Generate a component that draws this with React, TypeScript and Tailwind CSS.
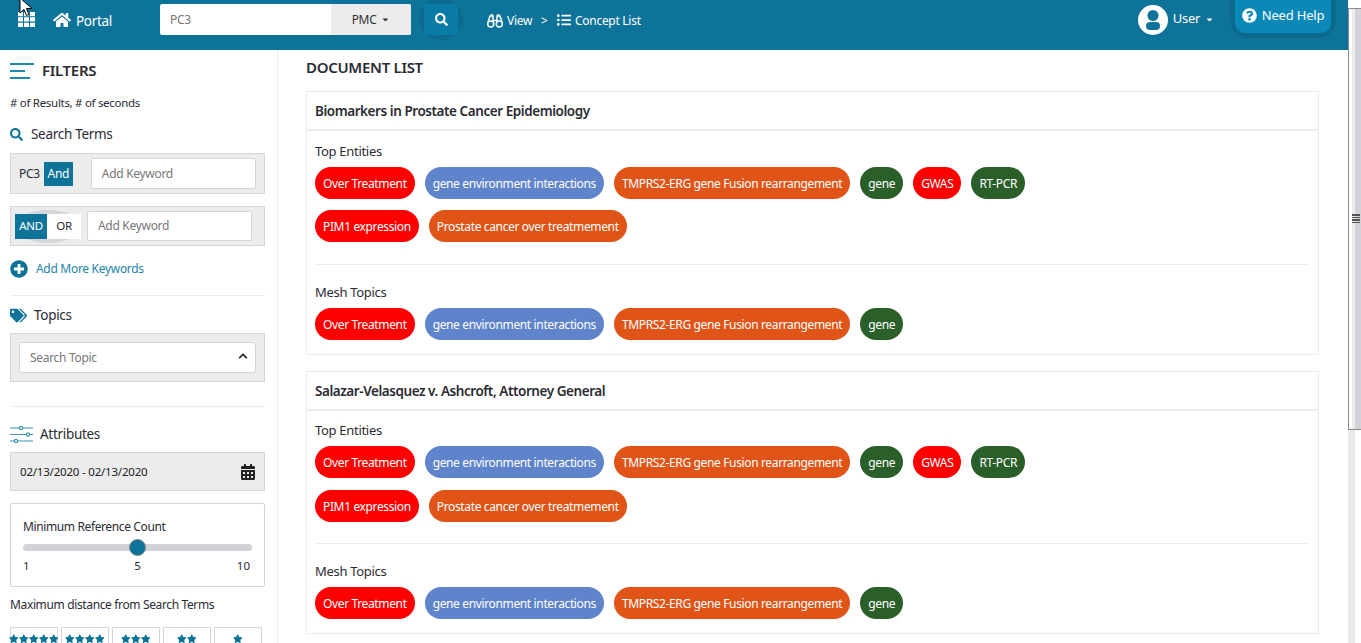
import { FaHome, FaListUl, FaTags, FaCalendarAlt, FaPlusCircle, FaSearch, FaQuestionCircle, FaStar, FaChevronUp, FaCaretDown } from "react-icons/fa"

const RED = "bg-[#ff0000]"
const BLUE = "bg-[#5f84cc]"
const ORANGE = "bg-[#e05517]"
const GREEN = "bg-[#2a5f2a]"

const topEntities = [
  [
    { label: "Over Treatment", color: RED },
    { label: "gene environment interactions", color: BLUE },
    { label: "TMPRS2-ERG gene Fusion rearrangement", color: ORANGE },
    { label: "gene", color: GREEN },
    { label: "GWAS", color: RED },
    { label: "RT-PCR", color: GREEN },
  ],
  [
    { label: "PIM1 expression", color: RED },
    { label: "Prostate cancer over treatmement", color: ORANGE },
  ],
]

const meshTopics = topEntities[0].slice(0, 4)

function Pill({ label, color }: { label: string; color: string }) {
  return (
    <span className={`flex h-8 items-center rounded-full px-2 pt-[1px] text-[12px] tracking-[-0.36px] text-white ${color}`}>
      {label}
    </span>
  )
}

interface DocCardProps {
  title: string
  topGap: string
  rowGap: string
  sepGap: string
}

function DocCard({ title, topGap, rowGap, sepGap }: DocCardProps) {
  return (
    <div className="border border-[#ececec]">
      <div className="flex h-[39px] items-center border-b-2 border-[#ececec] px-2 pt-[2px] text-[13.5px] font-semibold tracking-[-0.44px] text-[#2b2b33]">
        {title}
      </div>
      <div className="px-2">
        <div className={`text-[13px] leading-[18px] tracking-[-0.3px] text-[#2b2b33] ${topGap}`}>Top Entities</div>
        <div className={`mt-[7px] flex flex-col ${rowGap}`}>
          {topEntities.map((row, i) => (
            <div key={i} className="flex gap-[10px]">
              {row.map((p) => (
                <Pill key={p.label} {...p} />
              ))}
            </div>
          ))}
        </div>
        <div className={`border-t border-[#ececec] ${sepGap}`} />
        <div className="mt-[18px] text-[13px] leading-[18px] tracking-[-0.3px] text-[#2b2b33]">Mesh Topics</div>
        <div className="mt-[7px] flex gap-[10px] pb-[14px]">
          {meshTopics.map((p) => (
            <Pill key={p.label} {...p} />
          ))}
        </div>
      </div>
    </div>
  )
}

function FilterLines() {
  return (
    <svg width="24" height="16" viewBox="0 0 24 16" fill="none" stroke="#1b8bb0" strokeWidth="2">
      <path d="M0 1h24M0 8h15M0 15h20" />
    </svg>
  )
}

function SliderLines() {
  return (
    <svg width="23" height="17" viewBox="0 0 23 17" fill="none" stroke="#3b93b3" strokeWidth="1.2">
      <path d="M0 2h23M0 8.500h23M0 15h23" />
      <circle cx="11" cy="2" r="1.600" fill="#fff" />
      <circle cx="18" cy="8.500" r="1.600" fill="#fff" />
      <circle cx="6" cy="15" r="1.600" fill="#fff" />
    </svg>
  )
}

function GridIcon() {
  return (
    <svg className="ml-[18px] mt-[12px]" width="17" height="15" viewBox="0 0 17 15" fill="#fff">
      <path d="M0 0h5v4.300H0zM6 0h5v4.300H6zM12 0h5v4.300h-5zM0 5.300h5v4.300H0zM6 5.300h5v4.300H6zM12 5.300h5v4.300h-5zM0 10.700h5V15H0zM6 10.700h5V15H6zM12 10.700h5V15h-5z" />
    </svg>
  )
}

function BinocularsIcon() {
  return (
    <svg className="ml-[29px] mt-[14px]" width="16" height="14" viewBox="0 0 16 14" fill="none" stroke="#fff">
      <circle cx="3.700" cy="10" r="3" strokeWidth="1.500" />
      <circle cx="12.300" cy="10" r="3" strokeWidth="1.500" />
      <path d="M1 8.500 3 2h3v6M15 8.500 13 2h-3v6M6 6.500h4" strokeWidth="1.500" />
      <path d="M3.500 1h2.500M10 1h2.500" strokeWidth="1.500" />
    </svg>
  )
}

function UserIcon() {
  return (
    <svg width="30" height="30" viewBox="0 0 30 30">
      <circle cx="15" cy="15" r="15" fill="#fff" />
      <circle cx="15" cy="10.500" r="5.500" fill="#0e7399" />
      <rect x="8" y="17" width="14" height="8" rx="4" fill="#0e7399" />
    </svg>
  )
}

function Cursor() {
  return (
    <svg className="absolute left-[19px] top-[-3px]" width="15" height="20" viewBox="0 0 15 20">
      <path d="M1 1v15l4-3.500 2.500 6 2.500-1-2.500-6H13z" fill="#fff" stroke="#000" strokeWidth="1" />
    </svg>
  )
}

function StarCard({ count, last }: { count: number; last?: boolean }) {
  return (
    <div className={`flex h-[30px] w-12 justify-center gap-[0.5px] border border-[#d5d5da] pt-[6px] text-[#0e7399] ${last ? "" : "mr-[3px]"}`}>
      {Array.from({ length: count }).map((_, i) => (
        <FaStar key={i} className="h-[9.5px] w-[9.5px] shrink-0" />
      ))}
    </div>
  )
}

function Sidebar() {
  return (
    <aside className="w-[278px] shrink-0 border-r border-[#ececec] pl-[10px] pr-3 text-[#2b2b33]">
      <div className="flex h-[41px] items-center">
        <FilterLines />
        <span className="ml-2 pb-[1px] text-[15px] font-semibold tracking-[-0.3px]">FILTERS</span>
      </div>
      <div className="mt-[3px] text-[11.5px] leading-[18px] tracking-[-0.3px]">
        # of Results, # of seconds
      </div>
      <div className="mt-[12px] flex h-[20px] items-center">
        <FaSearch className="h-[13px] w-[13px] text-[#0e7399]" />
        <span className="ml-2 text-[13.5px] tracking-[-0.3px]">Search Terms</span>
      </div>
      <div className="mt-[9px] flex h-[41px] items-center border border-[#d5d5da] bg-[#ececec] pl-2 pr-2">
        <span className="text-[12px] tracking-[-0.3px]">PC3</span>
        <span className="ml-1 flex h-6 w-[29px] items-center justify-center bg-[#0e7399] text-[12px] tracking-[-0.3px] text-white">And</span>
        <div className="ml-[18px] flex h-[31px] flex-1 items-center rounded-[2px] border border-[#d5d5da] bg-white pl-[10px] text-[12px] tracking-[-0.3px] text-[#777]">Add Keyword</div>
      </div>
      <div className="mt-3 flex h-[40px] items-center border border-[#d5d5da] bg-[#ececec] pl-1 pr-3">
        <div className="relative flex">
          <span className="absolute inset-x-0 -inset-y-1 rounded-[50%] bg-[#d5d5da]" />
          <span className="relative flex h-[25px] w-8 items-center justify-center bg-[#0e7399] text-[11.5px] tracking-[-0.3px] text-white">AND</span>
          <span className="relative flex h-[25px] w-[34px] items-center justify-center bg-white text-[11.5px] tracking-[-0.3px]">OR</span>
        </div>
        <div className="ml-[6px] flex h-[30px] flex-1 items-center rounded-[2px] border border-[#d5d5da] bg-white pl-[10px] text-[12px] tracking-[-0.3px] text-[#777]">Add Keyword</div>
      </div>
      <div className="mt-[13px] flex h-[20px] items-center">
        <FaPlusCircle className="h-[18px] w-[18px] text-[#0e7399]" />
        <span className="ml-2 text-[12px] tracking-[-0.3px] text-[#1d84a8]">Add More Keywords</span>
      </div>
      <div className="mt-4 border-t border-[#ececec]" />
      <div className="mt-[9px] flex h-[20px] items-center">
        <FaTags className="h-[15px] w-[17px] text-[#0e7399]" />
        <span className="ml-[7px] text-[13.5px] tracking-[-0.3px]">Topics</span>
      </div>
      <div className="mt-[8px] flex h-[49px] items-center border border-[#d5d5da] bg-[#ececec] px-2">
        <div className="flex h-[31px] flex-1 items-center justify-between rounded-[3px] border border-[#d5d5da] bg-white pl-[10px] pr-[7px] pt-[1px] text-[12px] tracking-[-0.3px] text-[#777]">
          Search Topic
          <FaChevronUp className="mb-1 h-[10px] w-[10px] text-[#222]" />
        </div>
      </div>
      <div className="mt-6 border-t border-[#ececec]" />
      <div className="mt-[17px] flex h-[20px] items-center">
        <SliderLines />
        <span className="ml-[7px] text-[13.5px] tracking-[-0.3px]">Attributes</span>
      </div>
      <div className="mt-2 flex h-[39px] items-center justify-between border border-[#d5d5da] bg-[#ececec] pl-[9px] pr-2">
        <span className="text-[11.5px] tracking-[-0.2px] text-[#222]">02/13/2020 - 02/13/2020</span>
        <FaCalendarAlt className="h-4 w-4 text-[#222]" />
      </div>
      <div className="mt-3 h-[84px] rounded-[2px] border border-[#d5d5da] px-3 pt-[14px]">
        <div className="text-[12px] leading-[18px] tracking-[-0.38px]">Minimum Reference Count</div>
        <div className="relative mt-2 h-[7px] rounded-full bg-[#d2d2d8]">
          <span className="absolute left-[106px] top-[-5px] h-[17px] w-[17px] rounded-full border border-[#888] bg-[#0e7399]" />
        </div>
        <div className="mt-[7px] grid grid-cols-3 text-[11.5px] leading-[16px]">
          <span>1</span>
          <span className="text-center">5</span>
          <span className="pr-[2px] text-right">10</span>
        </div>
      </div>
      <div className="mt-[9px] text-[12px] leading-[18px] tracking-[-0.36px]">Maximum distance from Search Terms</div>
      <div className="mt-[13px] flex">
        <StarCard count={5} />
        <StarCard count={4} />
        <StarCard count={3} />
        <StarCard count={2} />
        <StarCard count={1} last />
      </div>
    </aside>
  )
}

function Header() {
  return (
    <header className="flex h-[50px] shrink-0 items-start bg-[#0e7399] text-white">
      <GridIcon />
      <FaHome className="ml-[18px] mt-[11px] h-[18px] w-[18px]" />
      <span className="ml-[5px] mt-[11px] text-[13.5px] tracking-[-0.3px]">Portal</span>
      <div className="ml-[48px] mt-[4px] flex h-[31px] w-[251px] overflow-hidden rounded-[2px] bg-white">
        <div className="flex flex-1 items-center pl-[10px] text-[12px] tracking-[-0.3px] text-[#777]">PC3</div>
        <div className="flex w-[80px] items-center justify-center gap-[5px] bg-[#ececec] text-[12px] tracking-[-0.3px] text-[#333]">
          PMC
          <FaCaretDown className="h-[9px] w-[9px]" />
        </div>
      </div>
      <div className="relative ml-[13px] mt-[4px] h-[31px] w-[34px]">
        <span className="absolute -inset-x-[5px] -bottom-[5px] -top-[6px] rounded-[50%] bg-[#0c6a8e]" />
        <span className="relative flex h-full items-center justify-center rounded-[2px] bg-[#0a7ba6]">
          <FaSearch className="h-[13px] w-[13px]" />
        </span>
      </div>
      <BinocularsIcon />
      <span className="ml-[4px] mt-[12px] text-[12px] tracking-[-0.3px]">View</span>
      <span className="ml-[9px] mt-[12px] text-[12px]">&gt;</span>
      <FaListUl className="ml-[9px] mt-[13px] h-[14px] w-[14px]" />
      <span className="ml-[4px] mt-[12px] text-[12px] tracking-[-0.28px]">Concept List</span>
      <div className="ml-auto mt-[5px]">
        <UserIcon />
      </div>
      <span className="ml-[5px] mt-[9px] text-[13px] tracking-[-0.3px]">User</span>
      <FaCaretDown className="ml-[5px] mt-[15px] h-[9px] w-[9px]" />
      <div className="relative ml-[21px] mr-[17px] h-[33px] w-[96px]">
        <span className="absolute -inset-x-[5px] -bottom-[5px] top-0 rounded-b-[18px] bg-[#0c6a8e]" />
        <span className="relative flex h-full items-center justify-center gap-[5px] rounded-b-[10px] bg-[#0a88b8] pb-[2px]">
          <FaQuestionCircle className="h-[15px] w-[15px]" />
          <span className="text-[13px] tracking-[-0.2px]">Need Help</span>
        </span>
      </div>
    </header>
  )
}

function Scrollbar() {
  return (
    <div className="relative flex w-[13px] shrink-0 flex-col">
      <div className="h-2 shrink-0" />
      <div className="relative flex h-[422px] shrink-0 border-y border-l border-[#8a8a8a]">
        <div className="w-[3px] bg-white" />
        <div className="w-[3px] bg-[#ececec]" />
        <div className="flex-1 bg-[#d2d2d8]" />
        <div className="absolute left-[3px] top-[205px] flex w-[8px] flex-col gap-[1px]">
          <span className="h-[1.5px] bg-[#555]" />
          <span className="h-[1.5px] bg-[#555]" />
          <span className="h-[1.5px] bg-[#555]" />
          <span className="h-[1.5px] bg-[#555]" />
        </div>
      </div>
      <div className="w-[7px] flex-1 bg-[#e9e9e9]" />
    </div>
  )
}

export default function App() {
  return (
    <div className="relative flex h-[643px] overflow-hidden bg-white font-['Noto_Sans',sans-serif]">
      <div className="flex min-w-0 flex-1 flex-col">
        <Header />
        <div className="flex min-h-0 flex-1">
          <Sidebar />
          <main className="flex-1 pl-7 pr-[29px]">
            <h1 className="mt-[7px] text-[15px] font-semibold leading-[21px] tracking-[-0.3px] text-[#2b2b33]">DOCUMENT LIST</h1>
            <div className="mt-[13px] flex flex-col gap-4">
              <DocCard title="Biomarkers in Prostate Cancer Epidemiology" topGap="mt-[11px]" rowGap="gap-[11px]" sepGap="mt-[22px]" />
              <DocCard title="Salazar-Velasquez v. Ashcroft, Attorney General" topGap="mt-[10px]" rowGap="gap-3" sepGap="mt-[21px]" />
            </div>
          </main>
        </div>
      </div>
      <Scrollbar />
      <Cursor />
    </div>
  )
}
